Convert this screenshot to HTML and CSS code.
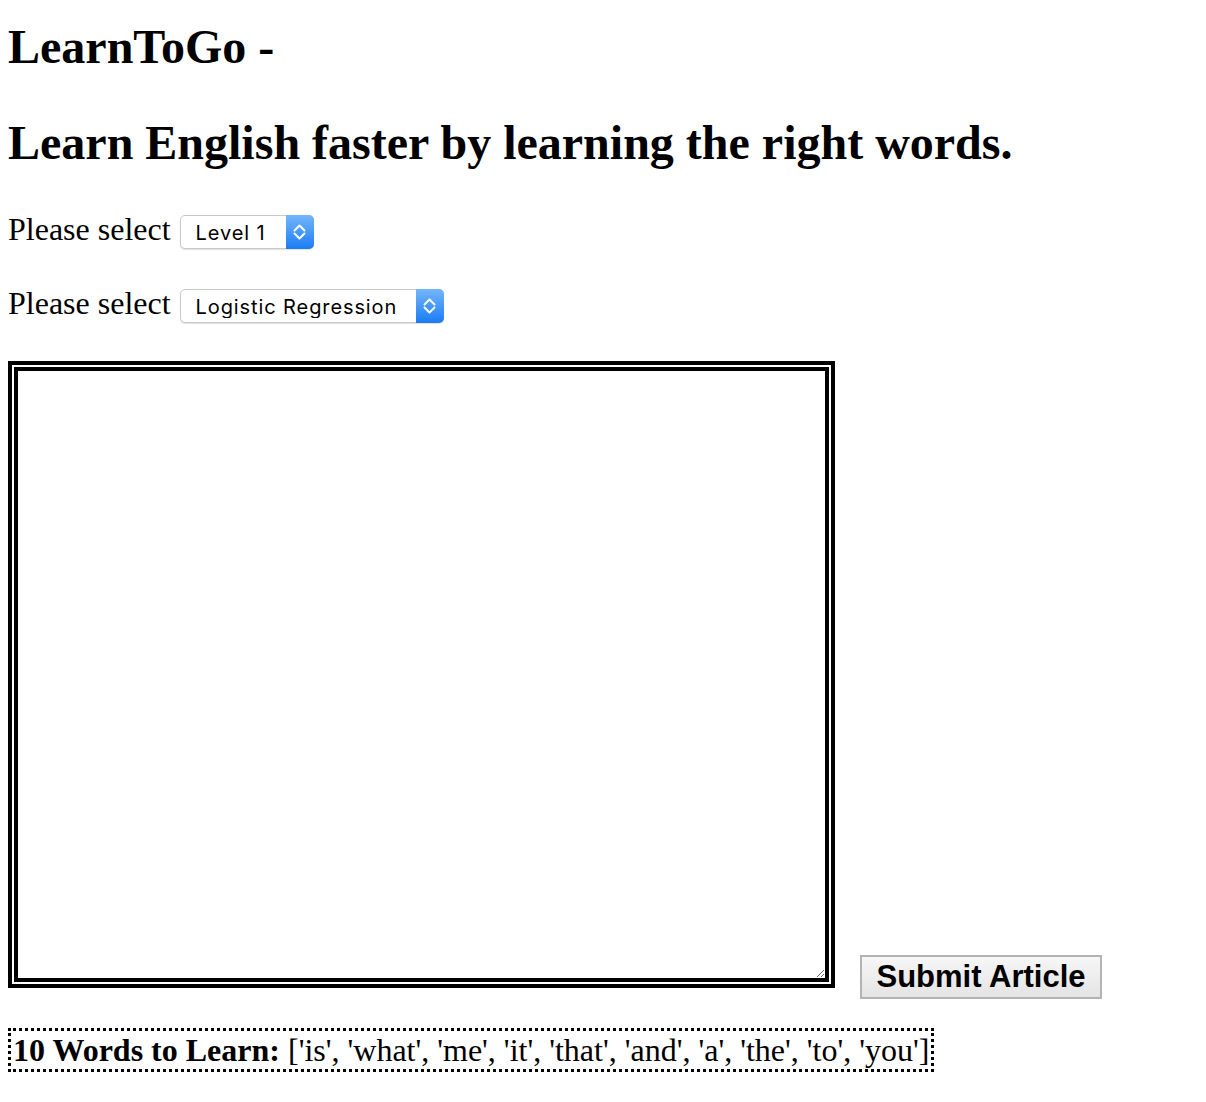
FILE: index.html
```html
<!DOCTYPE html>
<html lang="en">
<head>
<meta charset="utf-8">
<title>LearnToGo</title>
<link rel="stylesheet" href="styles.css">
</head>
<body>
<h1 class="title">LearnToGo -</h1>
<h2 class="subtitle">Learn English faster by learning the right words.</h2>
<form class="form">
  <div class="row row-first">
    <label class="label" for="level">Please select</label>
    <span class="select-wrap">
      <select id="level" class="select sel-level">
        <option selected>Level 1</option>
        <option>Level 2</option>
        <option>Level 3</option>
      </select>
      <span class="arrows"><svg width="13" height="20" viewBox="0 0 13 20"><path d="M1.5 8.5 L6.5 3.5 L11.5 8.5 M1.5 11.5 L6.5 16.5 L11.5 11.5" fill="none" stroke="#fff" stroke-width="2" stroke-linecap="round" stroke-linejoin="round"/></svg></span>
    </span>
  </div>
  <div class="row row-second">
    <label class="label" for="model">Please select</label>
    <span class="select-wrap">
      <select id="model" class="select sel-model">
        <option selected>Logistic Regression</option>
        <option>Naive Bayes</option>
      </select>
      <span class="arrows"><svg width="13" height="20" viewBox="0 0 13 20"><path d="M1.5 8.5 L6.5 3.5 L11.5 8.5 M1.5 11.5 L6.5 16.5 L11.5 11.5" fill="none" stroke="#fff" stroke-width="2" stroke-linecap="round" stroke-linejoin="round"/></svg></span>
    </span>
  </div>
  <div class="article-row">
    <div class="frame"><textarea class="article" name="article"></textarea></div>
    <button type="button" class="submit">Submit Article</button>
  </div>
</form>
<div class="result"><b>10 Words to Learn:</b> ['is', 'what', 'me', 'it', 'that', 'and', 'a', 'the', 'to', 'you']</div>
</body>
</html>
```
FILE: styles.css
```css
html, body {
  background: #fff;
}
body {
  margin: 0;
  padding: 0 8px;
  font-family: "Liberation Serif", "Times New Roman", serif;
  font-size: 32px;
  color: #000;
}
.title, .subtitle {
  font-size: 48px;
  line-height: 53px;
  font-weight: bold;
  margin: 0;
}
.title {
  padding-top: 20px;
}
.subtitle {
  margin-top: 43px;
}
.form {
  margin: 0;
}
.row {
  line-height: 36px;
}
.row-first {
  margin-top: 42px;
}
.row-second {
  margin-top: 36px;
}
.label {
  font-size: 32px;
}
.select-wrap {
  position: relative;
  display: inline-block;
  vertical-align: baseline;
  margin-left: 1px;
  font-size: 0;
  line-height: 0;
}
.select {
  -webkit-appearance: none;
  appearance: none;
  display: inline-block;
  box-sizing: border-box;
  height: 34px;
  margin: 0;
  padding: 5px 32px 4px 15px;
  font-family: Inter, "Liberation Sans", sans-serif;
  font-size: 20px;
  line-height: 24px;
  letter-spacing: 0.9px;
  color: #000;
  background: #fff;
  border: 1px solid #c9c9c9;
  border-radius: 5px;
  box-shadow: 0 1px 1px rgba(0, 0, 0, 0.12);
  vertical-align: baseline;
}
.sel-level {
  width: 134px;
}
.sel-model {
  width: 264px;
}
.arrows {
  position: absolute;
  top: 0;
  right: 0;
  width: 28px;
  height: 34px;
  box-sizing: border-box;
  border-radius: 0 5px 5px 0;
  background: linear-gradient(#74b6fb, #1b7cf6);
  display: flex;
  align-items: center;
  justify-content: center;
  pointer-events: none;
}
.arrows svg {
  display: block;
}
.article-row {
  display: flex;
  align-items: flex-end;
  gap: 25px;
  margin-top: 38px;
}
.frame {
  border: 4px solid #000;
  padding: 2px;
  margin-bottom: 11px;
}
.article {
  display: block;
  box-sizing: border-box;
  width: 815px;
  height: 615px;
  margin: 0;
  border: 4px solid #000;
  padding: 2px;
  font-family: "Liberation Mono", monospace;
  font-size: 16px;
  outline: none;
}
.submit {
  box-sizing: border-box;
  width: 242px;
  height: 44px;
  margin: 0;
  padding: 0 14px;
  font-family: "Liberation Sans", Arial, sans-serif;
  font-weight: bold;
  font-size: 31px;
  color: #000;
  border: 2px solid #b3b3b3;
  border-radius: 0;
  background: linear-gradient(#f6f6f6, #e4e4e4);
}
.result {
  display: inline-block;
  margin-top: 29px;
  border: 3px dotted #000;
  padding: 0 2px;
  line-height: 38px;
  font-size: 32px;
}
```
